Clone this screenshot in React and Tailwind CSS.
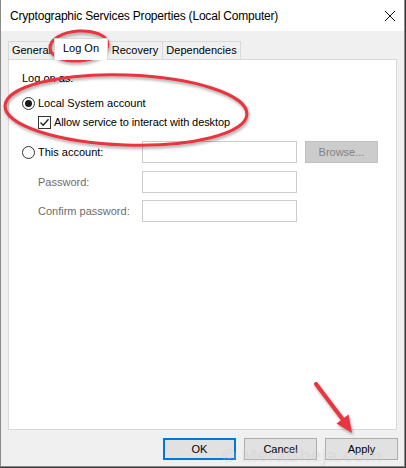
import React from "react";

function Radio({ checked }) {
  return (
    <span className="w-[13px] h-[13px] rounded-full border border-[#333333] bg-white flex items-center justify-center shrink-0">
      {checked && <span className="w-[7px] h-[7px] rounded-full bg-[#1a1a1a]" />}
    </span>
  );
}

function Checkbox() {
  return (
    <span className="w-[13px] h-[13px] border border-[#333333] bg-white flex items-center justify-center shrink-0">
      <svg width="11" height="11" viewBox="0 0 11 11">
        <path d="M1.5 5.5 L4.2 8.2 L9.5 2.2" fill="none" stroke="#1a1a1a" strokeWidth="1.3" />
      </svg>
    </span>
  );
}

export default function App() {
  return (
    <div
      className="relative w-[406px] h-[468px] bg-[#3b3b3b] overflow-hidden text-[11px] text-black"
      style={{ fontFamily: '"Liberation Sans", Arial, sans-serif' }}
    >
      <div className="w-[405px] h-[467px] bg-[#f0f0f0] border-l border-r border-b border-[#8a8a8a] flex flex-col">
        {/* title bar */}
        <div className="h-[31px] bg-white flex items-center justify-between pl-[9px] pr-[9px] shrink-0">
          <span className="text-[12px] tracking-[-0.2px]">Cryptographic Services Properties (Local Computer)</span>
          <svg width="10" height="10" viewBox="0 0 10 10">
            <path d="M0 0 L10 10 M10 0 L0 10" stroke="#111" strokeWidth="1" />
          </svg>
        </div>

        {/* tabs */}
        <div className="pt-[7px] pl-[7px] h-[28px] flex items-end shrink-0">
          <div className="w-[46px] h-[18px] border-t border-l border-[#d9d9d9] bg-[#f0f0f0] flex items-center justify-center">
            General
          </div>
          <div className="relative z-10 w-[54px] h-[22px] -mb-px border-t border-l border-r border-[#d9d9d9] bg-white flex items-center justify-center pb-[2px]">
            Log On
          </div>
          <div className="w-[54px] h-[18px] border-t border-[#d9d9d9] bg-[#f0f0f0] flex items-center justify-center">
            Recovery
          </div>
          <div className="w-[79px] h-[18px] border-t border-l border-r border-[#d9d9d9] bg-[#f0f0f0] flex items-center justify-center">
            Dependencies
          </div>
        </div>

        {/* panel */}
        <div className="mx-[7px] h-[371px] bg-white border border-[#d9d9d9] flex flex-col pl-[13px] pt-[10px] shrink-0">
          <div className="h-[16px] flex items-center">Log on as:</div>
          <div className="h-[16px] mt-[9px] flex items-center gap-[3px]">
            <Radio checked />
            <span>Local System account</span>
          </div>
          <div className="h-[16px] mt-[3px] ml-[16px] flex items-center gap-[3px]">
            <Checkbox />
            <span className="tracking-[-0.1px]">Allow service to interact with desktop</span>
          </div>
          <div className="h-[22px] mt-[11px] flex items-center">
            <div className="w-[120px] flex items-center gap-[3px]">
              <Radio />
              <span>This account:</span>
            </div>
            <div className="w-[155px] h-[22px] border border-[#cccccc] bg-white" />
            <div className="ml-[8px] w-[73px] h-[22px] border border-[#bfbfbf] bg-[#cccccc] text-[#838383] flex items-center justify-center">
              Browse...
            </div>
          </div>
          <div className="h-[22px] mt-[8px] flex items-center">
            <div className="w-[120px] pl-[16px] text-[#6d6d6d]">Password:</div>
            <div className="w-[155px] h-[22px] border border-[#cccccc] bg-white" />
          </div>
          <div className="h-[22px] mt-[7px] flex items-center">
            <div className="w-[120px] pl-[16px] text-[#6d6d6d]">Confirm password:</div>
            <div className="w-[155px] h-[22px] border border-[#cccccc] bg-white" />
          </div>
        </div>

        {/* buttons */}
        <div className="flex justify-end gap-[8px] pr-[6px] pt-[8px]">
          <div className="w-[73px] h-[22px] border-2 border-[#0078d7] bg-[#e1e1e1] flex items-center justify-center">
            OK
          </div>
          <div className="w-[73px] h-[22px] border border-[#adadad] bg-[#e1e1e1] flex items-center justify-center">
            Cancel
          </div>
          <div className="w-[73px] h-[22px] border border-[#adadad] bg-[#e1e1e1] flex items-center justify-center">
            Apply
          </div>
        </div>
      </div>

      {/* watermark */}
      <div
        className="absolute left-[222px] top-[446px] text-[19px] leading-[20px] font-bold text-[#d0d0d0] opacity-30 pointer-events-none whitespace-nowrap"
        style={{ fontFamily: '"Liberation Sans", Arial, sans-serif' }}
      >
        © MeraBheja.com
      </div>

      {/* annotations */}
      <svg className="absolute inset-0 pointer-events-none" width="406" height="468" viewBox="0 0 406 468">
        <defs>
          <filter id="sh" x="-20%" y="-20%" width="140%" height="140%">
            <feDropShadow dx="1" dy="2" stdDeviation="1.5" floodColor="#000" floodOpacity="0.35" />
          </filter>
        </defs>
        <g filter="url(#sh)" stroke="#e8353f" fill="none" strokeWidth="3">
          <ellipse cx="79" cy="46" rx="29" ry="15" transform="rotate(-4 79 46)" />
          <ellipse cx="126" cy="110" rx="121" ry="35" transform="rotate(2 126 110)" />
          <path d="M316 384 L344 421" strokeWidth="4" strokeLinecap="round" />
          <polygon points="352,433 336.5,423.5 348.5,414.5" fill="#e8353f" stroke="none" />
        </g>
      </svg>
    </div>
  );
}
